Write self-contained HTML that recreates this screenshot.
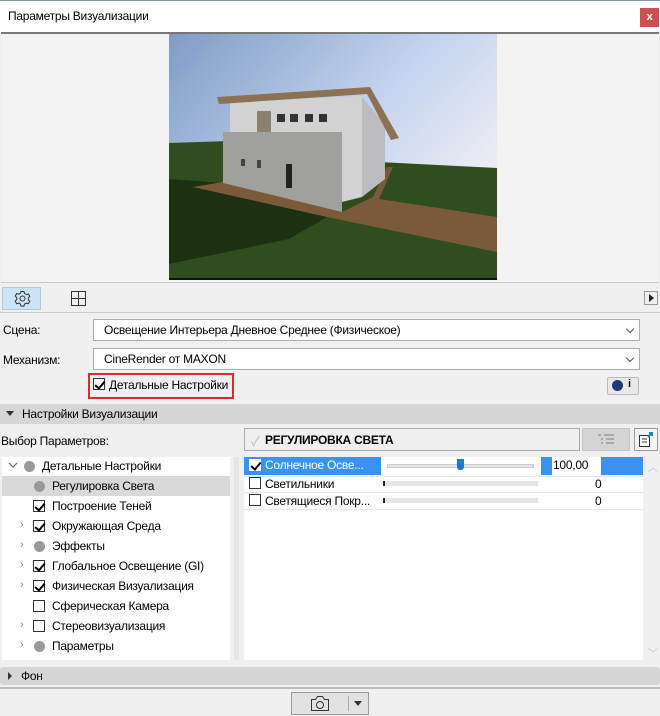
<!DOCTYPE html>
<html><head><meta charset="utf-8"><style>
*{box-sizing:border-box;margin:0;padding:0}
body{width:660px;height:716px;background:#f0f0f0;font-family:"Liberation Sans","Noto Sans CJK SC",sans-serif;font-size:12px;letter-spacing:-0.25px;color:#000;position:relative;overflow:hidden}
.a{position:absolute}
.cb{position:absolute;width:12px;height:12px;border:1px solid #333;background:#fff}
.ck::after{content:"";position:absolute;left:3px;top:0px;width:4px;height:8px;border:solid #000;border-width:0 2px 2px 0;transform:rotate(40deg)}
.dot{position:absolute;width:11px;height:11px;border-radius:50%;background:#999}
.chev{position:absolute;color:#888;font-size:11px}
.dd{position:absolute;background:#fff;border:1px solid #adadad;height:22px;padding:3px 0 0 10px;font-size:12px}
.dd::after{content:"";position:absolute;right:6px;top:6px;width:5px;height:5px;border:solid #555;border-width:0 1px 1px 0;transform:rotate(45deg)}
</style></head><body>
<div class="a" style="left:0;top:0;width:660px;height:1px;background:#7e9bb5"></div>
<div class="a" style="left:0;top:1px;width:660px;height:31px;background:#fff"></div>
<div class="a" style="left:8px;top:9px;font-size:12px">Параметры Визуализации</div>
<div class="a" style="left:640px;top:8px;width:19px;height:19px;background:#cd5050;color:#fff;font-weight:bold;text-align:center;line-height:19px;font-size:11px">x</div>
<div class="a" style="left:1px;top:32px;width:658px;height:2px;background:#777"></div>
<div class="a" style="left:1px;top:34px;width:658px;height:249px;background:#f3f3f3;border-bottom:1px solid #ccc"></div>
<svg class="a" style="left:169px;top:34px" width="328" height="246" viewBox="0 0 328 246">
<defs><linearGradient id="sky" x1="0" y1="0" x2="1" y2="0.7"><stop offset="0" stop-color="#7f9cc6"/><stop offset="0.55" stop-color="#c3d3ef"/><stop offset="1" stop-color="#f6f2f6"/></linearGradient></defs>
<rect width="328" height="246" fill="url(#sky)"/>
<polygon points="0,109 60,107 210,128 328,134 328,246 0,246" fill="#2f4d1e"/>
<polygon points="0,145 54,149 158,183 120,205 0,230" fill="#1d3112"/>
<polygon points="24,153 54,148 173,178 204,163 218,133 224,133 210,165 328,183 328,218 158,183" fill="#7b5a3c"/>
<polygon points="61,68 193,62 193,163 173,168 61,98" fill="#d2d2d2"/>
<polygon points="193,63 216,90 216,145 193,163" fill="#bcbcc0"/>
<polygon points="48,63 201,53 230,104 222,106 198,60 50,70" fill="#8c7252"/>
<polygon points="54,98 173,98 173,178 54,149" fill="#a0a09c"/>
<rect x="88" y="77" width="14" height="21" fill="#8a8070"/>
<rect x="108" y="80" width="8" height="8" fill="#333"/><rect x="121" y="80" width="8" height="8" fill="#333"/><rect x="136" y="80" width="8" height="8" fill="#333"/><rect x="150" y="80" width="8" height="8" fill="#333"/>
<rect x="117" y="130" width="6" height="24" fill="#222"/>
<rect x="72" y="125" width="4" height="7" fill="#444"/><rect x="88" y="126" width="4" height="8" fill="#444"/>
<rect x="0" y="244" width="328" height="2" fill="#111"/>
</svg>
<div class="a" style="left:2px;top:287px;width:39px;height:23px;background:#cce4f7;border:1px solid #a9cce9"></div>
<svg class="a" style="left:14px;top:290px" width="17" height="17" viewBox="0 0 17 17"><circle cx="8.5" cy="8.5" r="2.5" fill="none" stroke="#333"/><path d="M7 1.5h3l.5 2 1.8 1 2-.7 1.5 2.6-1.5 1.4v2l1.5 1.4-1.5 2.6-2-.7-1.8 1-.5 2H7l-.5-2-1.8-1-2 .7-1.5-2.6L2.7 9.5v-2L1.2 6.1l1.5-2.6 2 .7 1.8-1z" fill="none" stroke="#333"/></svg>
<svg class="a" style="left:70px;top:290px" width="17" height="17" viewBox="0 0 17 17"><rect x="1.5" y="1.5" width="14" height="14" fill="none" stroke="#333"/><path d="M8.5 1.5v14M1.5 8.5h14" stroke="#333"/></svg>
<div class="a" style="left:644px;top:291px;width:14px;height:14px;border:1px solid #999;background:#eee"></div>
<div class="a" style="left:649px;top:294px;width:0;height:0;border-left:5px solid #222;border-top:4px solid transparent;border-bottom:4px solid transparent"></div>
<div class="a" style="left:0;top:312px;width:660px;height:1px;background:#ccc"></div>
<div class="a" style="left:3px;top:323px">Сцена:</div>
<div class="dd" style="left:93px;top:319px;width:547px">Освещение Интерьера Дневное Среднее (Физическое)</div>
<div class="a" style="left:3px;top:353px">Механизм:</div>
<div class="dd" style="left:93px;top:348px;width:547px">CineRender от MAXON</div>
<div class="a" style="left:88px;top:373px;width:146px;height:26px;border:2px solid #e0292f"></div>
<div class="cb ck" style="left:93px;top:378px"></div>
<div class="a" style="left:109px;top:378px">Детальные Настройки</div>
<div class="a" style="left:607px;top:377px;width:32px;height:18px;border:1px solid #bbb;background:#e8e8e8;border-radius:2px"></div>
<div class="a" style="left:612px;top:380px;width:11px;height:11px;border-radius:50%;background:#1a3c7a"></div>
<div class="a" style="left:628px;top:378px;font-weight:bold;font-size:11px">i</div>
<div class="a" style="left:0;top:404px;width:660px;height:20px;background:#d6d6d6"></div>
<div class="a" style="left:6px;top:411px;border-top:5px solid #333;border-left:4px solid transparent;border-right:4px solid transparent"></div>
<div class="a" style="left:22px;top:407px">Настройки Визуализации</div>
<div class="a" style="left:1px;top:434px">Выбор Параметров:</div>
<div class="a" style="left:244px;top:428px;width:336px;height:23px;border:1px solid #aaa;background:#f0f0f0"></div>
<div class="a" style="left:251px;top:431px;color:#bbb;font-size:13px">✓</div>
<div class="a" style="left:265px;top:433px;font-weight:bold">РЕГУЛИРОВКА СВЕТА</div>
<div class="a" style="left:582px;top:428px;width:48px;height:23px;background:#d4d4d4;border:1px solid #c4c4c4"></div>
<svg class="a" style="left:597px;top:433px" width="18" height="13"><path d="M1 2h3M7 2h10M4 6h2M9 6h8M4 10h2M9 10h8" stroke="#aaa" stroke-width="2"/></svg>
<div class="a" style="left:634px;top:428px;width:24px;height:23px;background:#f4f4f4;border:1px solid #999"></div>
<svg class="a" style="left:638px;top:430px" width="18" height="19"><rect x="1.5" y="5.5" width="10" height="11" fill="#fff" stroke="#333"/><path d="M4 9h5M4 12h5" stroke="#333"/><path d="M10 7l4-4M11 3h3v3" stroke="#1f7ee0" stroke-width="2" fill="none"/></svg>
<div class="a" style="left:2px;top:457px;width:228px;height:203px;background:#fff"></div>
<div class="a" style="left:2px;top:476px;width:228px;height:20px;background:#d9d9d9"></div>
<svg class="a" style="left:8px;top:462px" width="10" height="8"><path d="M1 1l4 4 4-4" fill="none" stroke="#666" stroke-width="1.2"/></svg>
<div class="dot" style="left:24px;top:461px"></div><div class="a" style="left:42px;top:459px">Детальные Настройки</div>
<div class="dot" style="left:34px;top:481px"></div><div class="a" style="left:52px;top:479px">Регулировка Света</div>
<div class="cb ck" style="left:33px;top:500px"></div><div class="a" style="left:52px;top:499px">Построение Теней</div>
<div class="chev" style="left:20px;top:519px">›</div><div class="cb ck" style="left:33px;top:520px"></div><div class="a" style="left:52px;top:519px">Окружающая Среда</div>
<div class="chev" style="left:20px;top:539px">›</div><div class="dot" style="left:34px;top:541px"></div><div class="a" style="left:52px;top:539px">Эффекты</div>
<div class="chev" style="left:20px;top:559px">›</div><div class="cb ck" style="left:33px;top:560px"></div><div class="a" style="left:52px;top:559px">Глобальное Освещение (GI)</div>
<div class="chev" style="left:20px;top:579px">›</div><div class="cb ck" style="left:33px;top:580px"></div><div class="a" style="left:52px;top:579px">Физическая Визуализация</div>
<div class="cb" style="left:33px;top:600px"></div><div class="a" style="left:52px;top:599px">Сферическая Камера</div>
<div class="chev" style="left:20px;top:619px">›</div><div class="cb" style="left:33px;top:620px"></div><div class="a" style="left:52px;top:619px">Стереовизуализация</div>
<div class="chev" style="left:20px;top:639px">›</div><div class="dot" style="left:34px;top:641px"></div><div class="a" style="left:52px;top:639px">Параметры</div>
<div class="a" style="left:234px;top:457px;width:5px;height:203px;background:#e6e6e6"></div>
<div class="a" style="left:244px;top:457px;width:399px;height:203px;background:#fff"></div>
<div class="a" style="left:244px;top:457px;width:137px;height:18px;background:#3a93ef"></div>
<div class="cb ck" style="left:249px;top:459px;border-color:#fff"></div>
<div class="a" style="left:265px;top:458px;color:#fff">Солнечное Осве...</div>
<div class="a" style="left:387px;top:464px;width:147px;height:4px;background:#e6e6e6;border:1px solid #ccc"></div>
<div class="a" style="left:457px;top:459px;width:7px;height:11px;background:#1978d8;border-radius:0 0 3px 3px"></div>
<div class="a" style="left:541px;top:457px;width:11px;height:18px;background:#3a93ef"></div>
<div class="a" style="left:553px;top:458px">100,00</div>
<div class="a" style="left:601px;top:457px;width:42px;height:18px;background:#3a93ef"></div>
<div class="a" style="left:244px;top:476px;width:399px;height:1px;background:#e6e6e6"></div>
<div class="cb" style="left:249px;top:477px"></div><div class="a" style="left:265px;top:477px">Светильники</div>
<div class="a" style="left:383px;top:481px;width:155px;height:5px;background:#e6e6e6;border-left:2px solid #222"></div>
<div class="a" style="left:595px;top:477px">0</div>
<div class="a" style="left:244px;top:492px;width:399px;height:1px;background:#e6e6e6"></div>
<div class="cb" style="left:249px;top:494px"></div><div class="a" style="left:265px;top:494px">Светящиеся Покр...</div>
<div class="a" style="left:383px;top:498px;width:155px;height:5px;background:#e6e6e6;border-left:2px solid #222"></div>
<div class="a" style="left:595px;top:494px">0</div>
<div class="a" style="left:244px;top:509px;width:399px;height:1px;background:#e6e6e6"></div>
<div class="a" style="left:648px;top:459px;color:#bbb;font-size:10px">︿</div>
<div class="a" style="left:648px;top:645px;color:#bbb;font-size:10px">﹀</div>
<div class="a" style="left:0;top:667px;width:660px;height:18px;background:#d6d6d6;border-radius:3px"></div>
<div class="a" style="left:8px;top:672px;border-left:4px solid #333;border-top:4px solid transparent;border-bottom:4px solid transparent"></div>
<div class="a" style="left:21px;top:669px">Фон</div>
<div class="a" style="left:0;top:687px;width:660px;height:2px;background:#bbb"></div>
<div class="a" style="left:291px;top:692px;width:78px;height:23px;border:1px solid #999;background:#e2e2e2"></div>
<svg class="a" style="left:310px;top:695px" width="20" height="17"><path d="M1.5 4.5h4l2-3h5l2 3h4v11h-17z" fill="none" stroke="#333"/><circle cx="10" cy="10" r="3.5" fill="none" stroke="#333"/></svg>
<div class="a" style="left:348px;top:696px;width:1px;height:15px;background:#aaa"></div>
<div class="a" style="left:354px;top:701px;border-top:5px solid #333;border-left:4px solid transparent;border-right:4px solid transparent"></div>
</body></html>
